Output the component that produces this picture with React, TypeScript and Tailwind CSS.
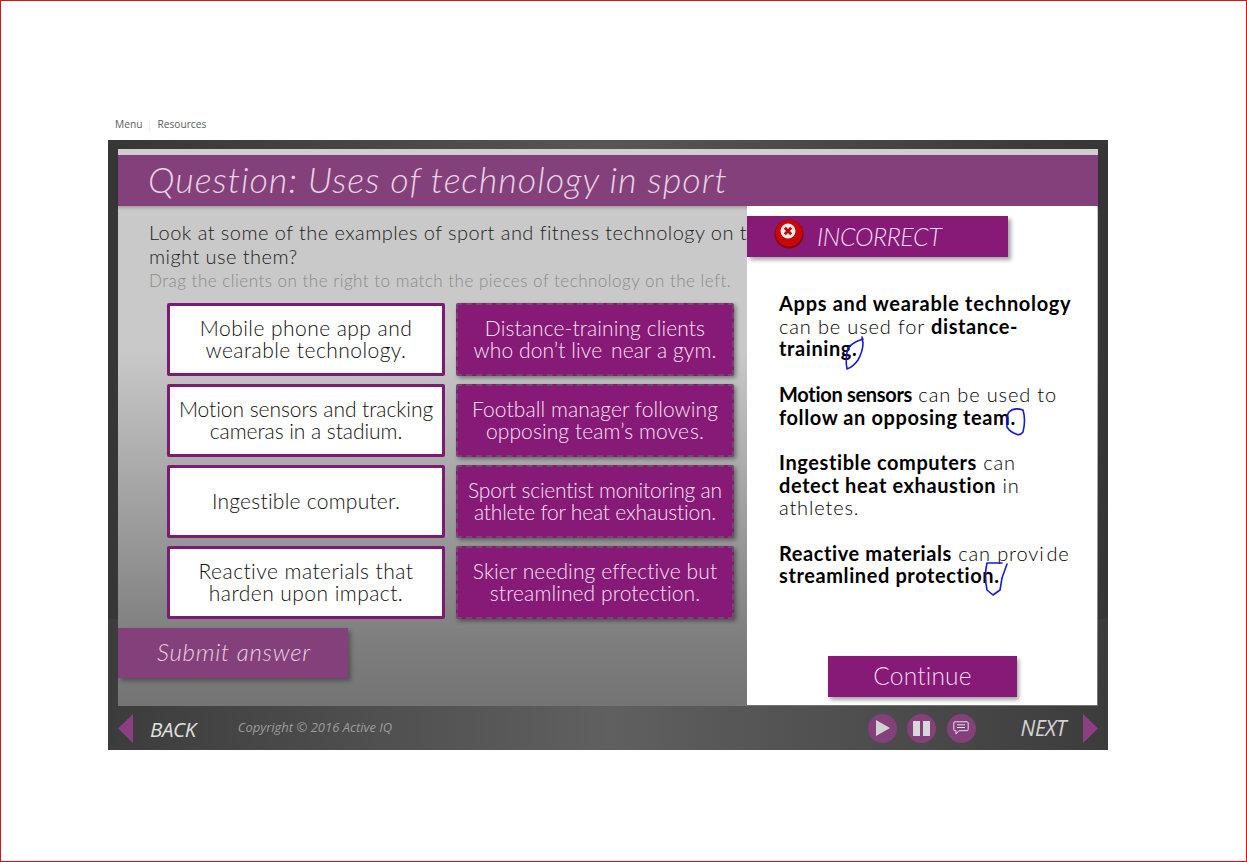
import React from "react";

const body = "font-['Lato','Open_Sans',sans-serif]";

const pairs = [
  {
    leftTrack: "tracking-[0.45px]",
    rightTrack: "tracking-[0.1px]",
    left: <>Mobile phone app and<br />wearable technology.</>,
    right: <>Distance-training clients<br />who don’t liv<span className="pr-[3px]">e</span> near a gym.</>,
  },
  {
    leftTrack: "tracking-[-0.05px]",
    rightTrack: "tracking-[0.1px]",
    left: <>Motion sensors and tracking<br />cameras in a stadium.</>,
    right: <>Football manager following<br />opposing team’s mov<span className="pr-[1px]">e</span>s.</>,
  },
  {
    leftTrack: "tracking-[0.25px]",
    rightTrack: "tracking-[-0.2px]",
    left: <>Ingestible computer.</>,
    right: <>Sport scientist monitoring an<br />athlete for heat exhaustion.</>,
  },
  {
    leftTrack: "tracking-[0.45px]",
    rightTrack: "tracking-[0.1px]",
    left: <>Reactive materials that<br />harden upon impact.</>,
    right: <>Skier needing effective but<br />streamlined protection.</>,
  },
];

function Scribbles() {
  return (
    <svg
      className="absolute inset-0 w-full h-full pointer-events-none"
      viewBox="747 206 350 499"
      fill="none"
      stroke="#1a1ad0"
      strokeWidth="1.6"
      strokeLinejoin="round"
      strokeLinecap="round"
    >
      <path d="M862 337 L863 343 Q863 351 858 360 Q853 367 847 369 Q845 358 848 348 Q853 342 863 339" />
      <path d="M1007 427 Q1006 416 1009 412 Q1014 407 1023 410 Q1026 420 1023 432 Q1020 436 1016 434 Q1010 432 1007 427" />
      <path d="M1007 564 L1002 578 L1000 590 L993 595 L987 590 Q984 575 987 563 L1002 563" />
    </svg>
  );
}

function IncorrectBanner() {
  return (
    <div className="flex items-center w-[261px] h-[41px] bg-[#861a76] shadow-[3px_3px_4px_rgba(0,0,0,0.35)]">
      <svg className="ml-[27px] w-[30px] h-[30px] -mt-[5px]" viewBox="0 0 30 30">
        <circle cx="15" cy="15" r="14.5" fill="#8a0606" />
        <circle cx="15" cy="14" r="13.5" fill="#c60808" />
        <circle cx="14" cy="12" r="7.5" fill="#f6eaea" />
        <path d="M10.8 8.8 L17.2 15.2 M17.2 8.8 L10.8 15.2" stroke="#b80808" strokeWidth="2.8" />
      </svg>
      <span className="ml-[13px] italic font-light text-[25px] tracking-[-0.4px] text-[#f0dcec]">INCORRECT</span>
    </div>
  );
}

export default function App() {
  return (
    <div className={`w-full h-[862px] bg-white border border-[#e01010] pl-[107px] pr-[138px] pt-[116px] ${body}`}>
      <div className="flex items-center h-[16px] pl-[7px] font-['Open_Sans',sans-serif] text-[10.2px] text-[#5c5c5c]">
        <span>Menu</span>
        <span className="mx-[7px] w-px h-[11px] bg-[#eeeeee]" />
        <span>Resources</span>
      </div>

      <div className="mt-[7px] w-[1000px] h-[610px] flex flex-col bg-[linear-gradient(to_bottom,rgba(0,0,0,0.1)_78.5%,transparent_78.5%),linear-gradient(to_right,#3c3c3c,#606060_50%,#3c3c3c)]">
        <div className="relative mx-[10px] mt-[9px] h-[557px] bg-[linear-gradient(to_bottom,#c9c9c9_0%,#c9c9c9_36%,#7e7e7e_88%,#747474_100%)]">
          <div className="pt-[6px] bg-[#d0cfcf]">
            <div className="h-[51px] pl-[30px] pb-[4px] flex items-center bg-[#84407a] shadow-[0_2px_3px_rgba(0,0,0,0.2)]">
              <h1 className="italic font-light text-[36px] tracking-[0.95px] text-[#e6d3e3]">Question: Uses of technology in sport</h1>
            </div>
          </div>

          <div className="pl-[31px] pt-[14px] whitespace-nowrap">
            <p className="font-light text-[20px] leading-[24px] tracking-[0.45px] text-[#222222]">
              Look at some of the examples of sport and fitness technology on the left. What types of clients
              <br />
              might use them?
            </p>
            <p className="mt-[1px] font-light text-[17px] leading-[23px] tracking-[0.5px] text-[#8a8a8a]">
              Drag the clients on the right to match the pieces of technology on the left.
            </p>
          </div>

          <div className="ml-[49px] mt-[11px] w-[567px] grid grid-cols-[278px_278px] gap-x-[11px] gap-y-[8.5px]">
            {pairs.map((p, i) => (
              <React.Fragment key={i}>
                <div className={`h-[72.5px] flex items-center justify-center text-center bg-white border-[3px] border-[#7d1a74] rounded-[2px] font-light text-[21px] leading-[22px] text-[#111111] ${p.leftTrack}`}>
                  <div>{p.left}</div>
                </div>
                <div className={`h-[72.5px] flex items-center justify-center text-center bg-[#861a76] border-2 border-dashed border-[#6f4a6c] rounded-[2px] shadow-[2px_2px_4px_rgba(0,0,0,0.4)] font-light text-[21px] leading-[22px] text-[#f7e2f3] ${p.rightTrack}`}>
                  <div>{p.right}</div>
                </div>
              </React.Fragment>
            ))}
          </div>

          <button className="block mt-[9px] w-[230px] h-[50px] pl-[39px] pb-[2px] text-left bg-[#84407a] shadow-[3px_3px_4px_rgba(0,0,0,0.3)] italic font-light text-[24px] tracking-[0.75px] text-[#e6d3e3]">
            Submit answer
          </button>

          {/* feedback popup over the slide */}
          <div className="absolute left-[629px] top-[57px] w-[350px] h-[499px] bg-white">
            <div className="mt-[10px]">
              <IncorrectBanner />
            </div>
            <div className="ml-[32px] mt-[35px] w-[310px] whitespace-nowrap text-[20px] leading-[22.7px] tracking-[0.85px] text-[#000000] font-light">
              <p>
                <b className="font-bold tracking-[0.7px]">Apps and wearable technology</b>
                <br />
                can be used for <b className="font-bold tracking-[0.6px]">distance-</b>
                <br />
                <b className="font-bold tracking-[0.6px]">training.</b>
              </p>
              <p className="mt-[22.7px]">
                <b className="font-bold tracking-[-0.3px]">Motion sensors</b> can be used to
                <br />
                <b className="font-bold tracking-[0.6px]">follow an opposing team.</b>
              </p>
              <p className="mt-[22.7px]">
                <b className="font-bold tracking-[0.6px]">Ingestible computers</b> can
                <br />
                <b className="font-bold tracking-[0.6px]">detect heat exhaustion</b> in
                <br />
                athletes.
              </p>
              <p className="mt-[22.7px]">
                <b className="font-bold tracking-[0.6px]">Reactive materials</b> can prov<span className="pr-[2px]">i</span>de
                <br />
                <b className="font-bold tracking-[0.6px]">streamlined protection.</b>
              </p>
            </div>
            <button className="absolute left-[81px] top-[450px] w-[189px] h-[41px] pb-[1px] bg-[#861a76] shadow-[2px_3px_4px_rgba(0,0,0,0.35)] font-light text-[24.5px] tracking-[0.2px] text-[#f2d9ee]">
              Continue
            </button>
            <Scribbles />
          </div>
        </div>

        <div className="flex-1 flex items-center pl-[10px] pr-[10px] font-['Open_Sans',sans-serif]">
          <svg width="15" height="29" viewBox="0 0 15 29"><path d="M15 0 V29 L0 14.5 Z" fill="#8d3f84" /></svg>
          <span className="ml-[17px] mt-[2px] italic text-[20.5px] text-[#e0e0e0] tracking-[-0.4px]">BACK</span>
          <span className="ml-[42px] italic text-[13px] text-[#9c9c9c] -mt-[1px]">Copyright © 2016 Active IQ</span>
          <div className="ml-auto flex items-center gap-[10.5px]">
            <div className="w-[29px] h-[29px] rounded-full bg-[#84407a] flex items-center justify-center">
              <svg width="14" height="16" viewBox="0 0 14 16" className="ml-[2px]"><path d="M0 0 L14 8 L0 16 Z" fill="#d2d2d2" /></svg>
            </div>
            <div className="w-[29px] h-[29px] rounded-full bg-[#84407a] flex items-center justify-center gap-[3px]">
              <div className="w-[7px] h-[15px] bg-[#d8d8d8]" />
              <div className="w-[7px] h-[15px] bg-[#d8d8d8]" />
            </div>
            <div className="w-[29px] h-[29px] rounded-full bg-[#84407a] flex items-center justify-center">
              <svg width="16" height="14" viewBox="0 0 16 14" fill="none" stroke="#e4e4e4" strokeWidth="1">
                <path d="M2 .8 H14 Q15.2 .8 15.2 2 V8.5 Q15.2 9.7 14 9.7 H6 L3 13 V9.7 H2 Q.8 9.7 .8 8.5 V2 Q.8 .8 2 .8 Z" />
                <path d="M4 3.8 H12 M4 6.5 H12" />
              </svg>
            </div>
          </div>
          <span className="ml-[45px] mt-[2px] italic text-[21px] text-[#d4d4d4] tracking-[-0.4px]">NEXT</span>
          <svg className="ml-[17px]" width="15" height="29" viewBox="0 0 15 29"><path d="M0 0 V29 L15 14.5 Z" fill="#8d3f84" /></svg>
        </div>
      </div>
    </div>
  );
}
